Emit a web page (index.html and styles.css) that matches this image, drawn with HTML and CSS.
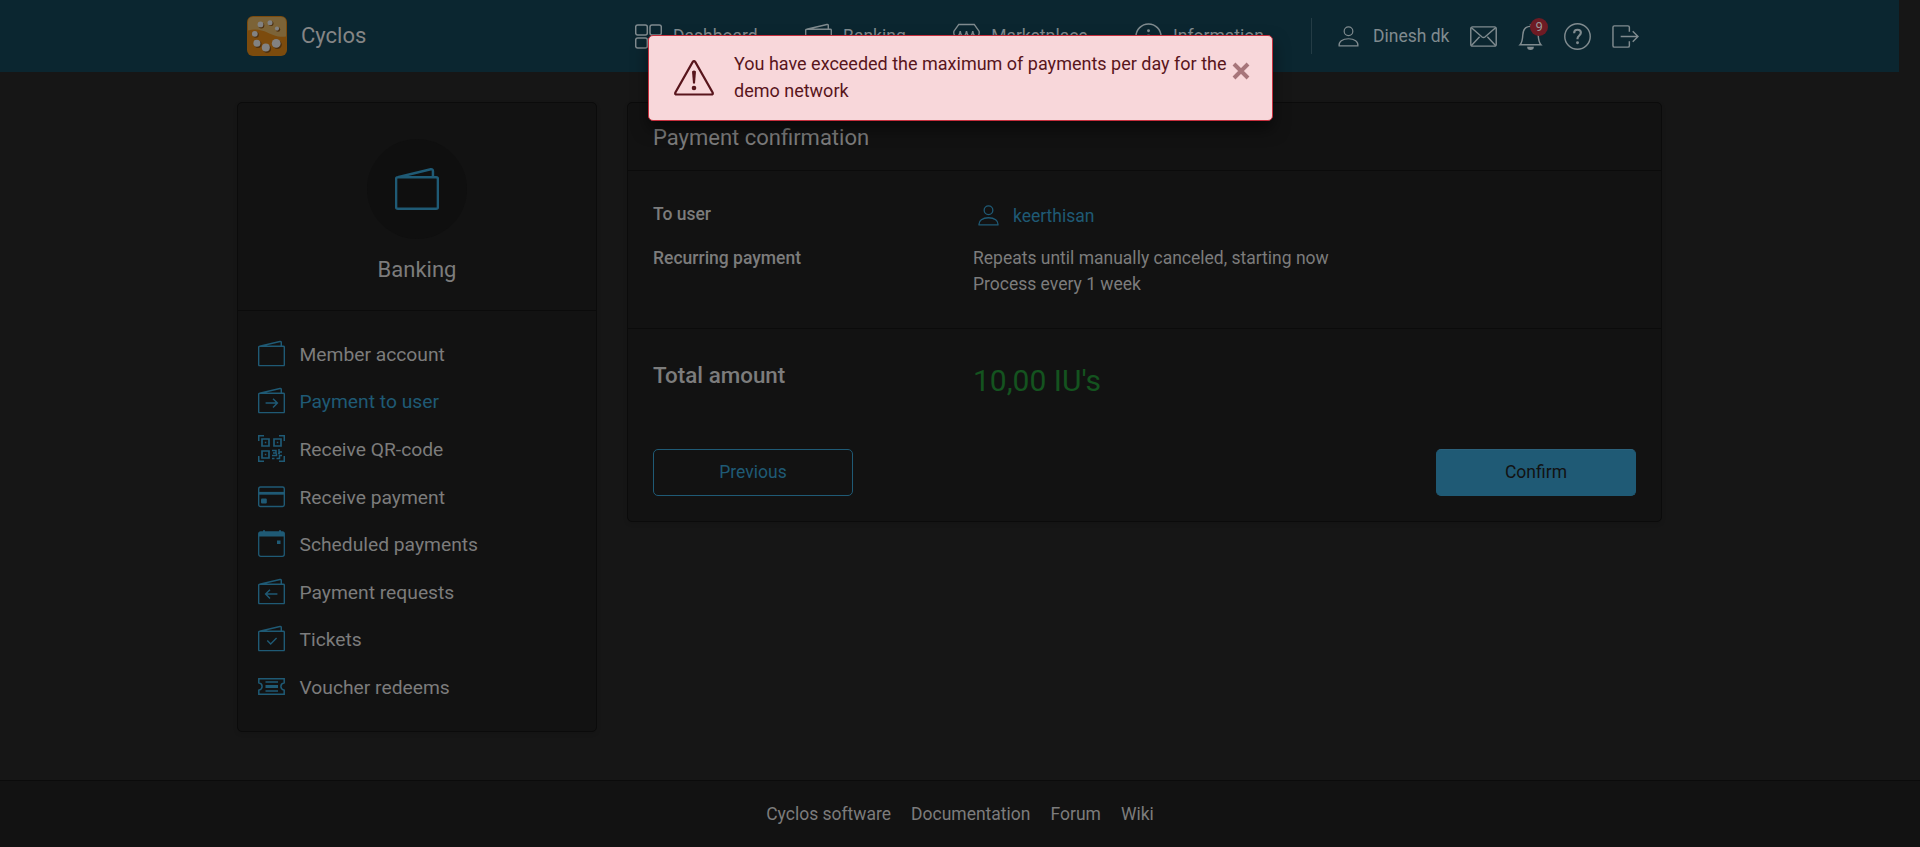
FILE: index.html
```html
<!DOCTYPE html>
<html lang="en">
<head>
<meta charset="utf-8">
<title>Cyclos</title>
<link rel="stylesheet" href="styles.css">
</head>
<body>
<svg class="defs" width="0" height="0">
  <defs>
    <symbol id="wallet" viewBox="0 0 16 16"><path d="M1 3.7h14a.6.6 0 0 1 .6.6v10.3a.6.6 0 0 1-.6.6H1a.6.6 0 0 1-.6-.6V4.300a.6.6 0 0 1 .6-.6L13 .85q.8-.1.8.7V3.700"/></symbol>
    <symbol id="person" viewBox="0 0 16 16"><circle cx="8" cy="4" r="3.300"/><path d="M.8 15.200c-.4-3.200 2.600-5.500 7.200-5.500s7.600 2.300 7.200 5.500z"/></symbol>
  </defs>
</svg>

<header class="topbar">
  <div class="container topbar-inner">
    <a class="brand">
      <svg class="logo" viewBox="0 0 40 40">
        <defs><clipPath id="logo-clip"><rect width="40" height="40" rx="6"/></clipPath></defs>
        <g clip-path="url(#logo-clip)">
          <rect width="40" height="40" fill="#7c4b0d"/>
          <path d="M1 14.500C15 11 22 19 31 20.500q5 .5 8 0V6q0-5-5-5H6Q1 1 1 6z" fill="#7c6337"/>
        </g>
        <g fill="#4d300f"><circle cx="14.300" cy="9.400" r="3"/><circle cx="24" cy="7.600" r="2.500"/><circle cx="31" cy="13.500" r="2.200"/><circle cx="8.800" cy="18.700" r="3"/><circle cx="11" cy="28.300" r="3.600"/><circle cx="20" cy="32.800" r="4.100"/><circle cx="30.300" cy="28.600" r="4.500"/></g>
        <g fill="#828282"><circle cx="13.500" cy="8.400" r="2.900"/><circle cx="23" cy="6.700" r="2.500"/><circle cx="30" cy="12.600" r="2.100"/><circle cx="7.800" cy="17.800" r="2.900"/><circle cx="9.900" cy="27.200" r="3.500"/><circle cx="18.800" cy="31.600" r="4"/><circle cx="29.200" cy="27.400" r="4.400"/></g>
      </svg>
      <span>Cyclos</span>
    </a>
    <nav class="menu">
      <a class="menu-item">
        <svg class="icon" viewBox="0 0 27 27"><rect x=".7" y="2" width="11.600" height="10" rx="2"/><rect x="15" y="2" width="11.300" height="10" rx="2"/><rect x=".7" y="15" width="11.600" height="10" rx="2"/><rect x="15" y="15" width="11.300" height="10" rx="2"/></svg>
        <span>Dashboard</span>
      </a>
      <a class="menu-item">
        <svg class="icon thin"><use href="#wallet"/></svg>
        <span>Banking</span>
      </a>
      <a class="menu-item">
        <svg class="icon" viewBox="0 0 28 28"><path d="M6 1.500h16l5 7q1 5-3.200 5-2.600 0-3.300-5-.7 5-3.200 5T14 8.500q-.7 5-3.300 5t-3.200-5q-.7 5-3.300 5Q0 13.500 1 8.500zM3 13.500v12.500h22V13.500"/></svg>
        <span>Marketplace</span>
      </a>
      <a class="menu-item">
        <svg class="icon" viewBox="0 0 28 28"><circle cx="14" cy="14" r="13"/><path d="M14 12v9" stroke-width="2.500"/><circle class="solid" cx="14" cy="8" r="1.500"/></svg>
        <span>Information</span>
      </a>
    </nav>
    <div class="tools">
      <a class="profile">
        <svg class="icon-person thin"><use href="#person"/></svg>
        <span>Dinesh dk</span>
      </a>
      <svg class="icon" viewBox="0 0 28 28"><rect x=".8" y="4" width="26.400" height="20" rx="2"/><path d="M1.500 5l11 9.500q1.500 1 3 0L26.500 5M1.500 23.300l8.500-9M26.500 23.300l-8.500-9"/></svg>
      <span class="bell">
        <svg class="icon" viewBox="0 0 28 28"><path d="M14 1v2M3.200 22.500h21.600c-2-2-2.500-4-2.800-10-.3-5.500-3-9-8-9s-7.700 3.500-8 9c-.3 6-.8 8-2.800 10z"/><path class="solid" d="M10.500 24.700h7a3.500 3.300 0 0 1-7 0z"/></svg>
        <span class="badge">9</span>
      </span>
      <svg class="icon" viewBox="0 0 28 28"><circle cx="14" cy="14" r="13.200"/><path d="M10.500 10.500c0-2.300 1.500-3.500 3.500-3.500s3.500 1.200 3.500 3.200c0 2.700-3.500 2.900-3.500 6v.6" stroke-width="2.200"/><circle class="solid" cx="14" cy="20.500" r="1.500"/></svg>
      <svg class="icon" viewBox="0 0 28 28"><path d="M18 9V4.500Q18 3 16.500 3h-14Q1 3 1 4.500v19Q1 25 2.500 25h14q1.500 0 1.500-1.500V19M9 14h18M21.500 8.500L27 14l-5.500 5.500"/></svg>
    </div>
  </div>
</header>

<main class="container page">
  <aside class="card sidebar">
    <div class="sidebar-head">
      <div class="circle"><svg class="icon-large"><use href="#wallet"/></svg></div>
      <h2>Banking</h2>
    </div>
    <ul class="side-menu">
      <li><svg class="icon" viewBox="0 0 16 16" stroke-width=".85"><use href="#wallet" width="16" height="16"/></svg>Member account</li>
      <li class="active"><svg class="icon" viewBox="0 0 16 16" stroke-width=".85"><use href="#wallet" width="16" height="16"/><path d="M4.500 9.500h7M8.900 6.900l2.600 2.600-2.600 2.600"/></svg>Payment to user</li>
      <li><svg class="icon" viewBox="0 0 27 27" stroke-width="1.500"><path d="M.75 6V.75H6M21 .75h5.250V6M26.250 21v5.250H21M6 26.250H.75V21"/><path d="M4 4h7v7H4zM16 4h7v7h-7zM4 16h7v7H4z" stroke-width="1.700"/><path class="solid" d="M6.800 6.800h1.500v1.500H6.800zM18.800 6.800h1.500v1.500h-1.500zM6.800 18.800h1.500v1.500H6.800z"/><path d="M14 15.500h4v2.500h-3M21 14v3h3M14 20.500h4.500v-2M14 23.500h2.500M18.500 23.500h3v-3H24M20 18.500h2"/></svg>Receive QR-code</li>
      <li><svg class="icon" viewBox="0 0 27 27" stroke-width="1.400"><rect x=".7" y="4" width="25.600" height="19.500" rx="1.800"/><path d="M1 10.300h25" stroke-width="2.800"/><rect class="solid" x="3" y="15.500" width="5.800" height="5" rx="1"/></svg>Receive payment</li>
      <li><svg class="icon" viewBox="0 0 27 27" stroke-width="1.300"><rect x=".7" y="1.800" width="25.600" height="24.500" rx="2"/><path class="solid" d="M1 2h4V.2h2V2h14V.2h2V2h3v4.500H1zM19 10.500h3.500V14H19z"/></svg>Scheduled payments</li>
      <li><svg class="icon" viewBox="0 0 16 16" stroke-width=".85"><use href="#wallet" width="16" height="16"/><path d="M11.500 9.500h-7M7.100 6.900L4.500 9.500l2.600 2.600"/></svg>Payment requests</li>
      <li><svg class="icon" viewBox="0 0 16 16" stroke-width=".85"><use href="#wallet" width="16" height="16"/><path d="M5.500 9.200l2 2 3.500-3.500"/></svg>Tickets</li>
      <li><svg class="icon" viewBox="0 0 27 27" stroke-width="1.500"><path d="M.8 5.800h25.400v4q-3.300.8-3.300 3.700t3.300 3.700v4H.8v-4q3.300-.8 3.300-3.700T.8 9.800z"/><path d="M7.500 9h12.500M7.500 18h12.500"/><path d="M7.500 13.500h12.500" stroke-width="3"/></svg>Voucher redeems</li>
    </ul>
  </aside>

  <section class="card content">
    <h1>Payment confirmation</h1>
    <dl class="details">
      <dt>To user</dt>
      <dd class="user"><svg class="icon-person"><use href="#person"/></svg><a>keerthisan</a></dd>
      <dt>Recurring payment</dt>
      <dd>Repeats until manually canceled, starting now<br>Process every 1 week</dd>
    </dl>
    <div class="total">
      <span class="total-label">Total amount</span>
      <span class="total-value">10,00 IU's</span>
    </div>
    <div class="actions">
      <button class="btn btn-outline">Previous</button>
      <button class="btn btn-primary">Confirm</button>
    </div>
  </section>
</main>

<footer class="footer">
  <a>Cyclos software</a><a>Documentation</a><a>Forum</a><a>Wiki</a>
</footer>

<div class="alert" role="alert">
  <svg class="alert-icon" viewBox="0 0 40 40"><path d="M18.600 4.200q1.400-2 2.800 0L38.600 34.500q.8 2-1.400 2H2.800q-2.200 0-1.400-2z" stroke-width="2.200"/><path class="solid" d="M18 13.500q2-2 4 0l-1 12h-2z"/><circle class="solid" cx="20" cy="30" r="2.300"/></svg>
  <p>You have exceeded the maximum of payments per day for the demo network</p>
  <svg class="alert-close" viewBox="0 0 18 18"><path d="M2 2l14 14M16 2L2 16"/></svg>
</div>
</body>
</html>
```

FILE: styles.css
```css
* { box-sizing: border-box; }

body {
  margin: 0;
  min-height: 847px;
  display: flex;
  flex-direction: column;
  background: #161616;
  color: #7c7c7c;
  font-family: Roboto, "Liberation Sans", sans-serif;
  font-size: 17.500px;
  line-height: 26px;
  overflow: hidden;
}

h1, h2, p, dl, dd, ul { margin: 0; padding: 0; }
h1, h2 { font-size: 22px; font-weight: 400; }

svg { flex: none; fill: none; stroke: currentColor; }
svg .solid { fill: currentColor; stroke: none; }
.defs { position: absolute; }
.logo { width: 40px; height: 40px; stroke: none; }
.icon { width: 27px; height: 27px; }
.icon-person { width: 21px; height: 21px; }
.thin { stroke-width: .9; }

.container { width: 1425px; margin-left: 237px; }

/* Top bar */
.topbar { width: 1899px; height: 72px; background: #0b2630; color: #808b8f; }
.topbar-inner { height: 72px; display: flex; align-items: center; padding-left: 10px; }
.topbar .icon { stroke-width: 1.500; }
.topbar .icon.thin { stroke-width: .85; }
.brand { width: 388px; display: flex; align-items: center; gap: 14px; font-size: 22px; color: #858585; }
.menu { width: 676px; display: flex; gap: 47.400px; }
.menu-item { display: flex; align-items: center; gap: 11px; }
.tools { height: 36px; padding-left: 26px; border-left: 1px solid #243c45; display: flex; align-items: center; gap: 20.300px; }
.profile { display: flex; align-items: center; gap: 14px; }
.bell { position: relative; display: flex; }
.badge {
  position: absolute; top: -5px; right: -4px;
  width: 18px; height: 18px; border-radius: 50%;
  background: #6e1b24; color: #999;
  font-size: 13px; line-height: 18px; text-align: center;
}

/* Page */
.page { display: flex; align-items: flex-start; gap: 30px; padding-top: 30px; flex: 1; }
.card { background: #121212; border: 1px solid #0b0b0b; border-radius: 5px; box-shadow: 0 2px 4px rgba(0, 0, 0, .1); }
.sidebar { width: 360px; height: 630px; }
.sidebar-head { height: 208px; padding-top: 36px; border-bottom: 1px solid #0b0b0b; display: flex; flex-direction: column; align-items: center; gap: 18px; }
.circle { width: 100px; height: 100px; border-radius: 50%; background: #0f0f0f; display: flex; align-items: center; justify-content: center; color: #1f5a75; }
.icon-large { width: 44px; height: 44px; stroke-width: .9; }
.side-menu { list-style: none; padding: 20px; font-size: 19.250px; }
.side-menu li { height: 47.600px; display: flex; align-items: center; gap: 14.500px; }
.side-menu .icon { color: #1f5a75; margin-top: -3px; }
.active { color: #1f5a75; }

.content { width: 1035px; height: 420px; }
.content h1 { height: 68px; padding: 22px 25px 0; border-bottom: 1px solid #0b0b0b; }
.details { height: 158px; padding: 30px 25px 0; display: grid; grid-template-columns: 320px 1fr; grid-template-rows: 29px 52px; row-gap: 15px; border-bottom: 1px solid #0b0b0b; }
dt { font-weight: 500; }
.user { display: flex; align-items: center; gap: 14.500px; padding-left: 4.500px; color: #1f5a75; }
.total { display: grid; grid-template-columns: 320px 1fr; padding: 33px 25px 0; height: 120px; }
.total-label { font-size: 22.400px; font-weight: 500; }
.total-value { font-size: 30px; line-height: 38px; color: #14531f; }
.actions { display: flex; justify-content: space-between; padding: 0 25px; }
.btn { width: 200px; height: 47px; padding: 0 6px 2px; border: 1px solid #1f5a75; border-radius: 5px; font: 17.500px/26px Roboto, "Liberation Sans", sans-serif; }
.btn-outline { background: transparent; color: #1f5a75; }
.btn-primary { background: #1f5a75; color: #121212; border-top-color: #2b617b; }

.footer { height: 67px; background: #121212; border-top: 1px solid #0b0b0b; display: flex; justify-content: center; align-items: center; gap: 20px; }

/* Notification over the page */
.alert {
  position: absolute; top: 35px; left: 648px;
  width: 625px; height: 86px; padding: 14px 22px 14px 25px;
  display: flex; align-items: flex-start;
  background: #f8d7da; border: 1px solid #c62f3d; border-radius: 5px;
  color: #58151c; font-size: 18px; line-height: 27px;
  box-shadow: 0 8px 16px rgba(0, 0, 0, .5);
}
.alert p { flex: 1; padding-left: 20px; }
.alert-icon { width: 40px; height: 40px; margin-top: 8px; }
.alert-close { width: 18px; height: 18px; margin-top: 12px; opacity: .5; stroke-width: 4; }
```
